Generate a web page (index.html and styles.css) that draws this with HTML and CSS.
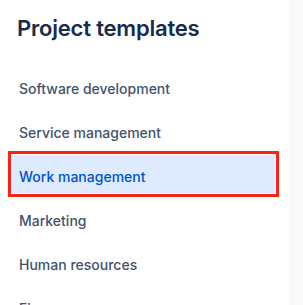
FILE: index.html
```html
<!DOCTYPE html>
<html lang="en">
<head>
    <meta charset="UTF-8">
    <meta name="viewport" content="width=device-width, initial-scale=1.0">
    <title>Project templates</title>
    <link rel="stylesheet" href="styles.css">
</head>
<body>
    <div class="layout">
        <nav class="sidebar">
            <h1>Project templates</h1>
            <ul class="template-list">
                <li class="template-item">Software development</li>
                <li class="template-item">Service management</li>
                <li class="template-item selected">Work management</li>
                <li class="template-item">Marketing</li>
                <li class="template-item">Human resources</li>
                <li class="template-item">Finance</li>
            </ul>
        </nav>
        <div class="content"></div>
    </div>
</body>
</html>
```

FILE: styles.css
```css
* {
    margin: 0;
    padding: 0;
    box-sizing: border-box;
}

body {
    font-family: Inter, "Noto Sans", sans-serif;
    background-color: #ffffff;
    overflow: hidden;
}

.layout {
    display: flex;
    height: 305px;
}

.sidebar {
    width: 289px;
    flex-shrink: 0;
    padding: 14px 10px 0 8px;
}

h1 {
    font-size: 22px;
    line-height: 28px;
    font-weight: 600;
    color: #172b4d;
    letter-spacing: -0.2px;
    margin: 0 0 24px 9px;
}

.template-list {
    list-style: none;
}

.template-item {
    height: 44px;
    display: flex;
    align-items: center;
    padding-left: 11px;
    font-size: 14px;
    font-weight: 500;
    color: #42526e;
}

/* highlighted row, with the red callout frame */
.template-item.selected {
    height: 46px;
    margin: -3px 0 1px;
    padding: 4px 0 0 8px;
    border: 3px solid #fb2414;
    background-color: #deebff;
    box-shadow: inset 0 0 0 1px #ffffff;
    color: #0052cc;
}

.content {
    flex: 1;
    background-color: #f8f9fa;
}
```
